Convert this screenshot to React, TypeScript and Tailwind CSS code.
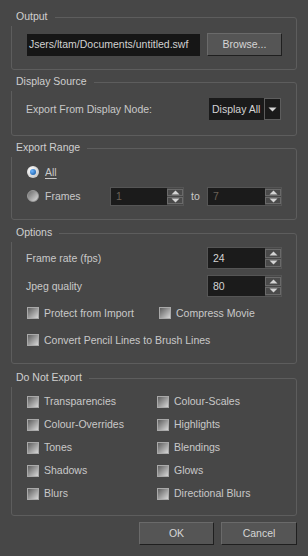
import type { ReactNode } from 'react'

const BG = 'bg-[#474747]'

type GroupProps = { title: string; className?: string; children: ReactNode }

const Group = ({ title, className = '', children }: GroupProps) => (
  <div className={`relative box-border rounded-[3px] border border-[#5d5d5d] ${className}`}>
    <span className={`absolute -top-[8px] left-[-2px] ${BG} pl-[6px] pr-[7px] pb-[3px] leading-[13px] text-[#cfcfcf]`}>
      {title}
    </span>
    {children}
  </div>
)

const Checkbox = ({ label, className = '' }: { label: string; className?: string }) => (
  <div className={`flex items-center gap-[5px] ${className}`}>
    <span className="box-border h-[12px] w-[12px] shrink-0 border border-[#a9a9a9] bg-[linear-gradient(135deg,#5e5e5e,#d6d6d6)]" />
    <span className="text-[#c9c9c9]">{label}</span>
  </div>
)

const Radio = ({ checked }: { checked?: boolean }) =>
  checked ? (
    <span className="flex h-[12px] w-[12px] shrink-0 items-center justify-center rounded-full bg-[radial-gradient(circle_at_35%_35%,#ffffff,#b8b8b8)]">
      <span className="h-[6px] w-[6px] rounded-full bg-[radial-gradient(circle_at_35%_35%,#6fb6ff,#0a4f9a)]" />
    </span>
  ) : (
    <span className="h-[12px] w-[12px] shrink-0 rounded-full border border-[#9a9a9a] bg-[linear-gradient(135deg,#6a6a6a,#dcdcdc)]" />
  )

const Arrow = ({ up }: { up?: boolean }) => (
  <svg width="9" height="5" viewBox="0 0 9 5">
    <path d={up ? 'M0.5 4.5 L4.5 0.5 L8.5 4.5 Z' : 'M0.5 0.5 L4.5 4.5 L8.5 0.5 Z'} fill="#d4d4d4" />
  </svg>
)

type SpinProps = { value: string; disabled?: boolean; className?: string }

const Spin = ({ value, disabled, className = '' }: SpinProps) => (
  <div className={`box-border flex border border-[#555] bg-[#1b1b1b] ${className}`}>
    <span className={`flex flex-1 items-center pl-[5px] ${disabled ? 'text-[#6b6258]' : 'text-[#d4d4d4]'}`}>
      {value}
    </span>
    <div className="flex w-[16px] flex-col gap-[1px] bg-[#474747] py-[1px]">
      <span className="box-border flex flex-1 items-center justify-center border border-[#6a6a6a] bg-[#4a4a4a]">
        <Arrow up />
      </span>
      <span className="box-border flex flex-1 items-center justify-center border border-[#6a6a6a] bg-[#4a4a4a]">
        <Arrow />
      </span>
    </div>
  </div>
)

const Button = ({ label, className = '' }: { label: string; className?: string }) => (
  <button
    className={`box-border flex h-[23px] items-center justify-center border border-t-[#6a6a6a] border-l-[#6a6a6a] border-b-[#1f1f1f] border-r-[#1f1f1f] bg-[#555555] text-[#d6d6d6] ${className}`}
  >
    {label}
  </button>
)

const DO_NOT_EXPORT: [string, string][] = [
  ['Transparencies', 'Colour-Scales'],
  ['Colour-Overrides', 'Highlights'],
  ['Tones', 'Blendings'],
  ['Shadows', 'Glows'],
  ['Blurs', 'Directional Blurs'],
]

export default function App() {
  return (
    <div
      className={`box-border h-[556px] w-[308px] ${BG} px-[11px] pt-[17px] font-['Liberation_Sans',Arial,sans-serif] text-[10.5px] leading-none text-[#c9c9c9]`}
    >
      <Group title="Output" className="h-[53px] pl-[15px] pr-[14px] pt-[15px]">
        <div className="flex items-center gap-[7px]">
          <div className="flex h-[22px] w-[173px] items-center overflow-hidden bg-[#161616] pl-[2px] text-[#d2d2d2]">
            <span className="whitespace-nowrap">Jsers/ltam/Documents/untitled.swf</span>
          </div>
          <Button label="Browse..." className="w-[75px]" />
        </div>
      </Group>

      <Group title="Display Source" className="mt-[12px] h-[54px] pl-[14px] pr-[15px] pt-[15px]">
        <div className="flex h-[22px] items-center justify-between">
          <span>Export From Display Node:</span>
          <div className="flex h-[22px] w-[72px] bg-[#1a1a1a]">
            <span className="flex flex-1 items-center pl-[3px] text-[#d4d4d4]">Display All</span>
            <span className="box-border flex w-[17px] items-center justify-center border border-[#5d5d5d]">
              <Arrow />
            </span>
          </div>
        </div>
      </Group>

      <Group title="Export Range" className="mt-[12px] h-[72px] pl-[15px] pr-[14px] pt-[11px]">
        <div className="flex h-[24px] items-center gap-[6px]">
          <Radio checked />
          <span className="underline decoration-[#c9c9c9] underline-offset-2">All</span>
        </div>
        <div className="flex h-[24px] items-center">
          <div className="flex w-[83px] items-center gap-[6px]">
            <Radio />
            <span>Frames</span>
          </div>
          <Spin value="1" disabled className="h-[19px] w-[74px]" />
          <span className="mx-[7px] w-[9px]">to</span>
          <Spin value="7" disabled className="h-[19px] w-[75px]" />
        </div>
      </Group>

      <Group title="Options" className="mt-[13px] h-[131px] pl-[14px] pr-[14px] pt-[13px]">
        <div className="flex h-[22px] items-center justify-between">
          <span>Frame rate (fps)</span>
          <Spin value="24" className="h-[22px] w-[75px]" />
        </div>
        <div className="mt-[6px] flex h-[22px] items-center justify-between">
          <span>Jpeg quality</span>
          <Spin value="80" className="h-[22px] w-[75px]" />
        </div>
        <div className="mt-[6px] flex h-[20px] items-center pl-[1px]">
          <Checkbox label="Protect from Import" className="w-[132px]" />
          <Checkbox label="Compress Movie" />
        </div>
        <div className="mt-[7px] flex h-[20px] items-center pl-[1px]">
          <Checkbox label="Convert Pencil Lines to Brush Lines" />
        </div>
      </Group>

      <Group title="Do Not Export" className="mt-[14px] h-[138px] pl-[15px] pt-[11px]">
        {DO_NOT_EXPORT.map(([a, b]) => (
          <div key={a} className="flex h-[23px] items-center">
            <Checkbox label={a} className="w-[130px]" />
            <Checkbox label={b} />
          </div>
        ))}
      </Group>

      <div className="mt-[6px] flex justify-end gap-[7px]">
        <Button label="OK" className="w-[75px]" />
        <Button label="Cancel" className="w-[76px]" />
      </div>
    </div>
  )
}
